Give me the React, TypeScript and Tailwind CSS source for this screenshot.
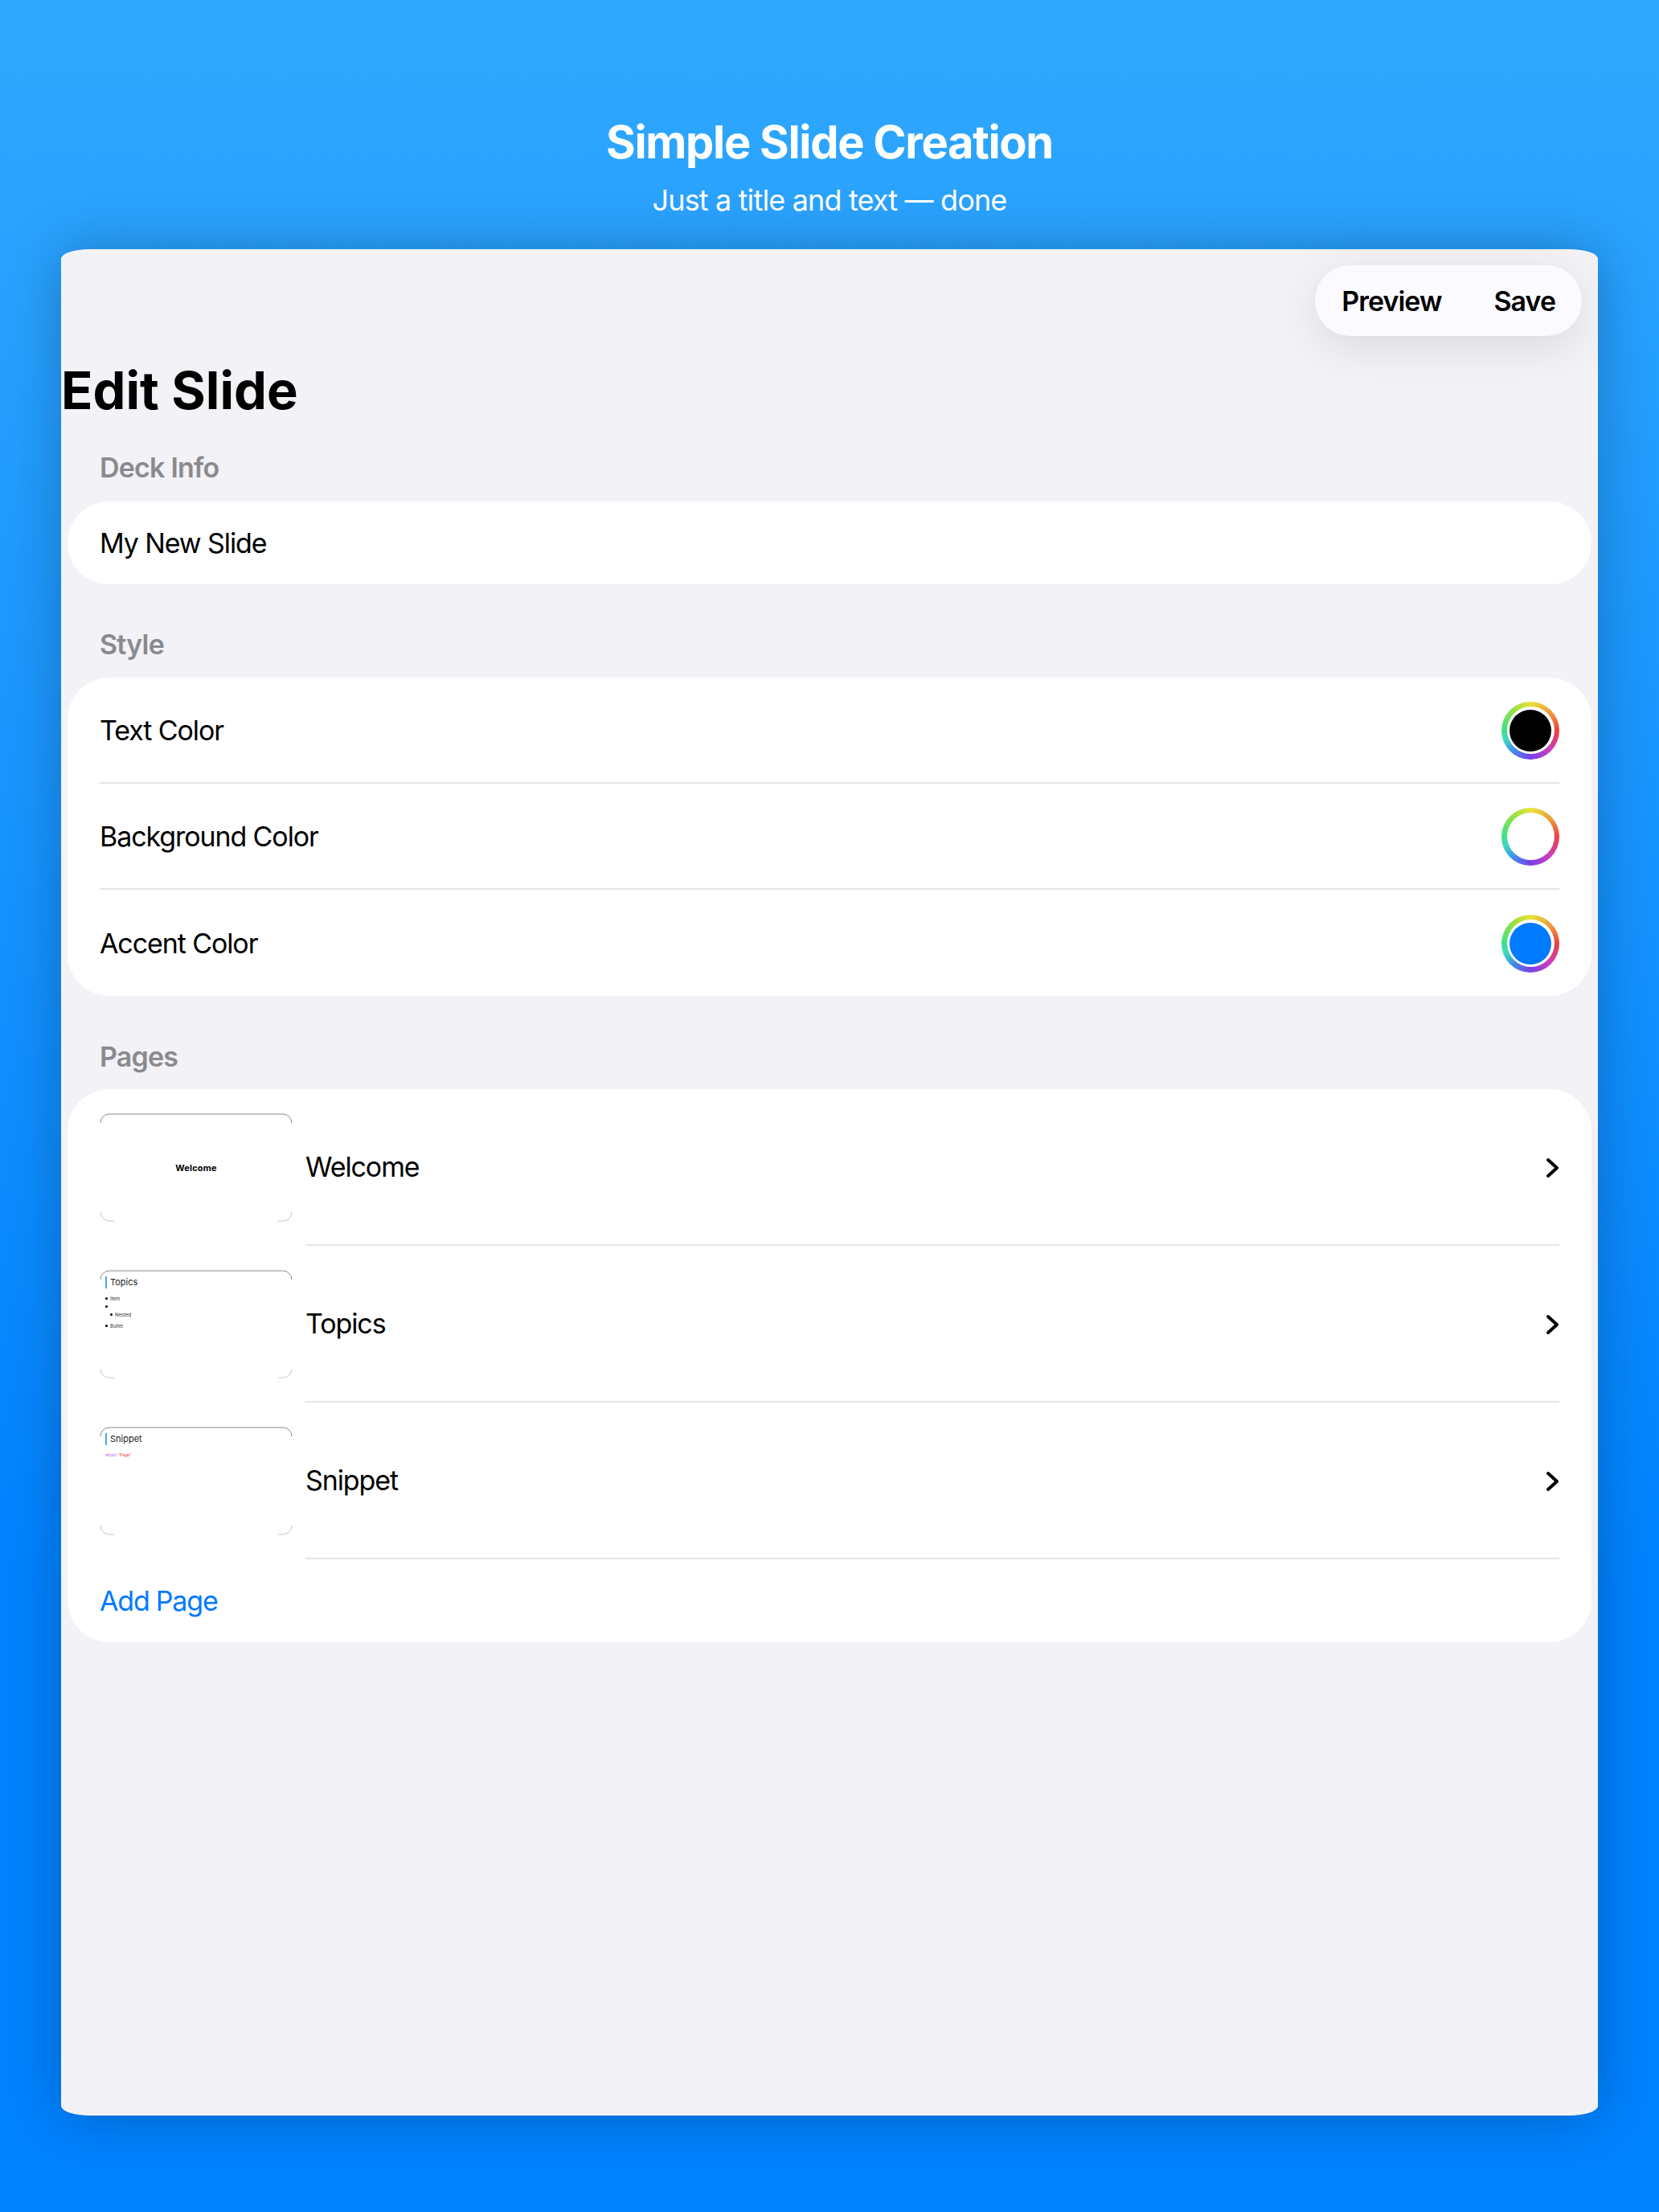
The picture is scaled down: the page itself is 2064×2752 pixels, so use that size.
const font = "font-['Inter','Noto_Sans',sans-serif]";

const rainbow =
  "bg-[conic-gradient(#e8e23a_0deg,#ee9a3c_50deg,#ec4040_90deg,#c83fc0_135deg,#7a3fe8_180deg,#3f8fe8_220deg,#3fd8c0_250deg,#45e080_275deg,#a0e040_325deg,#e8e23a_360deg)]";

function ColorWell({ fill }: { fill: string }) {
  return (
    <div className={`flex h-[72px] w-[72px] items-center justify-center rounded-full ${rainbow}`}>
      <div className="flex h-[59px] w-[59px] items-center justify-center rounded-full bg-white">
        <div className={`h-[52px] w-[52px] rounded-full ${fill}`} />
      </div>
    </div>
  );
}

function Chevron() {
  return (
    <svg className="h-[28px] w-[20px]" viewBox="0 0 20 28" fill="none" stroke="#000" strokeWidth="4" strokeLinecap="round" strokeLinejoin="round">
      <path d="M6 5 L17 15 L6 25" />
    </svg>
  );
}

function ThumbFrame() {
  return (
    <svg className="absolute inset-0 h-[135px] w-[240px]" viewBox="0 0 240 135" fill="none">
      <path d="M1 12 A11 11 0 0 1 12 1 H228 A11 11 0 0 1 239 12" stroke="#8a8a8a" strokeWidth="1" />
      <path d="M1 123 A11 11 0 0 0 12 134 H18" stroke="#c4c4c4" strokeWidth="1" />
      <path d="M239 123 A11 11 0 0 1 228 134 H222" stroke="#c4c4c4" strokeWidth="1" />
    </svg>
  );
}

function ThumbHeading({ children }: { children: string }) {
  return (
    <div className="flex items-center gap-[4px]">
      <div className="h-[15px] w-[2px] bg-[#4ea8f8]" />
      <span className="text-[11px] leading-[15px] text-[#222]">{children}</span>
    </div>
  );
}

function Dot({ label, nested }: { label?: string; nested?: boolean }) {
  return (
    <div className={`flex h-[9px] items-center gap-[3px] ${nested ? "pl-[6px]" : ""}`}>
      <div className="h-[3px] w-[3px] rounded-full bg-black" />
      <span className="text-[6px] leading-[9px] text-[#333]">{label}</span>
    </div>
  );
}

function WelcomeThumb() {
  return (
    <div className="flex h-full items-center justify-center pt-[1px]">
      <span className="text-[11px] font-bold tracking-[0.2px] text-black">Welcome</span>
    </div>
  );
}

function TopicsThumb() {
  return (
    <div className="flex flex-col pl-[7px] pt-[8px]">
      <ThumbHeading>Topics</ThumbHeading>
      <div className="mt-[8px] flex flex-col gap-[1px]">
        <Dot label="Item" />
        <Dot />
        <Dot label="Nested" nested />
        <div className="h-[3px]" />
        <Dot label="Bullet" />
      </div>
    </div>
  );
}

function SnippetThumb() {
  return (
    <div className="flex flex-col pl-[7px] pt-[8px]">
      <ThumbHeading>Snippet</ThumbHeading>
      <div className="mt-[8px] flex h-[8px] items-center gap-[2px] text-[5px] leading-[8px]">
        <span className="text-[#a855f7]">struct</span>
        <span className="text-[#ef4444]">"Page"</span>
      </div>
    </div>
  );
}

const styleRows = [
  { label: "Text Color", fill: "bg-black" },
  { label: "Background Color", fill: "bg-white" },
  { label: "Accent Color", fill: "bg-[#007aff]" },
];

const pages = [
  { label: "Welcome", thumb: <WelcomeThumb /> },
  { label: "Topics", thumb: <TopicsThumb /> },
  { label: "Snippet", thumb: <SnippetThumb /> },
];

export default function App() {
  return (
    <div className={`flex h-[2752px] w-[2064px] flex-col items-center overflow-hidden bg-[linear-gradient(180deg,#30a8ff_0%,#0082ff_72%)] pt-[141px] ${font}`}>
      <h1 className="h-[72px] text-[56px] font-bold leading-[72px] tracking-[-1.3px] text-white">Simple Slide Creation</h1>
      <p className="mt-[11px] h-[50px] text-[36px] leading-[50px] tracking-[-0.85px] text-white">Just a title and text — done</p>

      <div className="mt-[36px] h-[2322px] w-[1912px] rounded-[36px/12px] bg-[#f2f2f7] px-[8px] pt-[20px] shadow-[0_0_70px_rgba(0,0,0,0.25)]">
        <div className="flex justify-end pr-[12px]">
          <div className="flex h-[88px] items-center gap-[65px] rounded-full bg-[#fbfaff] px-[33px] text-[34px] font-semibold tracking-[-1px] text-black shadow-[0_14px_60px_rgba(0,0,0,0.1)]">
            <span>Preview</span>
            <span>Save</span>
          </div>
        </div>

        <h2 className="-ml-[8px] mt-[28px] h-[80px] text-[65px] font-bold leading-[80px] text-black">Edit Slide</h2>

        <h3 className="ml-[40px] mt-[36px] h-[40px] text-[34px] font-semibold leading-[40px] tracking-[-0.8px] text-[#8a8a8e]">Deck Info</h3>
        <div className="mt-[22px] flex h-[103px] items-center rounded-[52px] bg-white px-[40px] text-[34px] tracking-[-1.1px] text-black">My New Slide</div>

        <h3 className="ml-[40px] mt-[55px] h-[40px] text-[34px] font-semibold leading-[40px] tracking-[-0.8px] text-[#8a8a8e]">Style</h3>
        <div className="mt-[21px] rounded-[52px] bg-white pl-[40px] pr-[40px]">
          {styleRows.map((row, i) => (
            <div key={row.label} className={`flex h-[132px] items-center justify-between pt-[1px] text-[34px] tracking-[-1.1px] text-black ${i < 2 ? "border-b-2 border-[#e5e5e7]" : ""}`}>
              <span>{row.label}</span>
              <ColorWell fill={row.fill} />
            </div>
          ))}
        </div>

        <h3 className="ml-[40px] mt-[56px] h-[40px] text-[34px] font-semibold leading-[40px] tracking-[-0.8px] text-[#8a8a8e]">Pages</h3>
        <div className="mt-[20px] rounded-[52px] bg-white pl-[40px] pr-[40px]">
          {pages.map((page) => (
            <div key={page.label} className="flex h-[195px] items-center">
              <div className="relative h-[135px] w-[240px] shrink-0 overflow-hidden rounded-[12px] bg-white">
                {page.thumb}
                <ThumbFrame />
              </div>
              <div className="ml-[16px] flex h-full flex-1 items-center justify-between border-b-2 border-[#e5e5e7] text-[34px] tracking-[-1.1px] text-black">
                <span>{page.label}</span>
                <Chevron />
              </div>
            </div>
          ))}
          <div className="flex h-[103px] items-center text-[34px] tracking-[-1.2px] text-[#007aff]">Add Page</div>
        </div>
      </div>
    </div>
  );
}
